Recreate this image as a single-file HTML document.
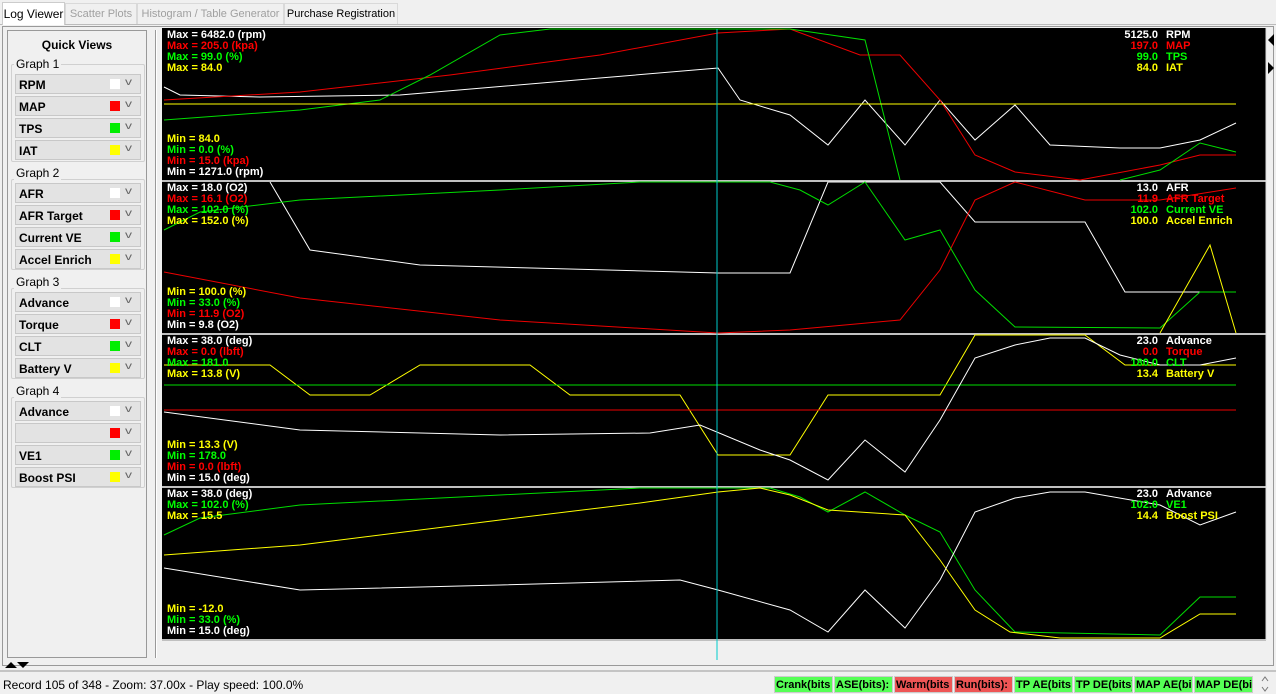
<!DOCTYPE html>
<html><head><meta charset="utf-8"><style>
*{margin:0;padding:0;box-sizing:border-box}
body{width:1276px;height:694px;background:#f0f0f0;font-family:"Liberation Sans",sans-serif;position:relative;overflow:hidden;font-size:12px}
.a{position:absolute}
.tab{position:absolute;top:3px;height:21px;border:1px solid #d9d9d9;border-bottom:none;background:#f0f0f0;font-size:11px;padding:4px 0 0;text-align:center;color:#000;white-space:nowrap;overflow:hidden}
.dis{color:#a0a0a0}
.grp{position:absolute;left:11px;width:134px;border:1px solid #d0d0d0;border-radius:2px}
.gl{position:absolute;left:14px;font-size:12px;background:#f0f0f0;padding:0 2px;color:#000}
.it{position:absolute;left:15px;width:126px;height:20px;background:#e3e3e3;border:1px solid #c8c8c8;font-weight:bold;font-size:12px;padding:3px 0 0 3px}
.it i{position:absolute;left:94px;top:4px;width:10px;height:10px}
.it b{position:absolute;left:110px;top:2px;font-weight:normal;color:#666;font-size:10px;transform:scaleX(1.4)}
.t{position:absolute;font-weight:bold;font-size:11px;line-height:11px;white-space:pre}
.w{color:#fff}.r{color:#f00}.g{color:#0f0}.y{color:#ff0}
.st{position:absolute;top:676px;height:17px;font-weight:bold;font-size:11px;padding:2px 1px 0;overflow:hidden;white-space:nowrap;border:1px solid #ccc}
</style></head><body>
<div class="a" style="left:0;top:24px;width:1276px;height:1px;background:#bbb"></div>
<div class="tab" style="left:2px;top:2px;width:63px;height:23px;background:#fff;border-color:#ccc;font-size:12px">Log Viewer</div>
<div class="tab dis" style="left:65px;width:72px">Scatter Plots</div>
<div class="tab dis" style="left:137px;width:147px">Histogram / Table Generator</div>
<div class="tab" style="left:284px;width:114px">Purchase Registration</div>
<div class="a" style="left:2px;top:26px;width:1272px;height:640px;border:1px solid #999"></div>
<div class="a" style="left:7px;top:30px;width:140px;height:628px;border:1px solid #999"></div>
<div class="a" style="left:155px;top:30px;width:2px;height:628px;border-left:1px solid #999;border-right:1px solid #fff"></div>
<div class="a" style="left:0;top:38px;width:154px;text-align:center;font-weight:bold;font-size:12px">Quick Views</div>
<div class="grp" style="top:64px;height:98px"></div><div class="gl" style="top:57px">Graph 1</div>
<div class="grp" style="top:179px;height:91px"></div><div class="gl" style="top:166px">Graph 2</div>
<div class="grp" style="top:288px;height:91px"></div><div class="gl" style="top:275px">Graph 3</div>
<div class="grp" style="top:397px;height:91px"></div><div class="gl" style="top:384px">Graph 4</div>
<div class="it" style="top:74px">RPM<i style="background:#fff"></i><b>v</b></div>
<div class="it" style="top:96px">MAP<i style="background:#f00"></i><b>v</b></div>
<div class="it" style="top:118px">TPS<i style="background:#0e0"></i><b>v</b></div>
<div class="it" style="top:140px">IAT<i style="background:#ff0"></i><b>v</b></div>
<div class="it" style="top:183px">AFR<i style="background:#fff"></i><b>v</b></div>
<div class="it" style="top:205px">AFR Target<i style="background:#f00"></i><b>v</b></div>
<div class="it" style="top:227px">Current VE<i style="background:#0e0"></i><b>v</b></div>
<div class="it" style="top:249px">Accel Enrich<i style="background:#ff0"></i><b>v</b></div>
<div class="it" style="top:292px">Advance<i style="background:#fff"></i><b>v</b></div>
<div class="it" style="top:314px">Torque<i style="background:#f00"></i><b>v</b></div>
<div class="it" style="top:336px">CLT<i style="background:#0e0"></i><b>v</b></div>
<div class="it" style="top:358px">Battery V<i style="background:#ff0"></i><b>v</b></div>
<div class="it" style="top:401px">Advance<i style="background:#fff"></i><b>v</b></div>
<div class="it" style="top:423px"><i style="background:#f00"></i><b>v</b></div>
<div class="it" style="top:445px">VE1<i style="background:#0e0"></i><b>v</b></div>
<div class="it" style="top:467px">Boost PSI<i style="background:#ff0"></i><b>v</b></div>

<svg class="a" style="left:0;top:0" width="1276" height="694">
<rect x="162" y="28" width="1104" height="612" fill="#000"/>
<g stroke="#c0c0c0" stroke-width="2"><line x1="162" y1="181" x2="1266" y2="181"/><line x1="162" y1="334" x2="1266" y2="334"/><line x1="162" y1="487" x2="1266" y2="487"/><line x1="162" y1="640" x2="1266" y2="640"/></g>
<line x1="1266" y1="28" x2="1266" y2="640" stroke="#ddd"/>
<g fill="none" stroke-width="1">
<polyline stroke="#fff" points="164,87 180,95 260,97 400,95 600,78 718,68 740,100 790,115 828,145 865,100 905,145 940,100 975,140 1015,105 1050,145 1120,148 1160,148 1200,140 1236,123"/>
<polyline stroke="#e00" points="164,100 300,92 450,75 600,55 718,33 790,29 860,55 900,55 940,100 975,155 1015,172 1080,180 1160,165 1200,155 1236,155"/>
<polyline stroke="#0d0" points="164,120 300,110 380,100 430,75 500,35 550,29 790,29 865,40 900,180"/>
<polyline stroke="#0d0" points="1120,180 1160,170 1200,143 1236,152"/>
<line x1="164" y1="104" x2="1236" y2="104" stroke="#ff0"/>
<polyline stroke="#fff" points="270,182 310,250 420,265 718,273 790,273 828,182 940,182 975,222 1085,222 1125,292 1236,292"/>
<polyline stroke="#e00" points="164,272 300,298 500,320 718,333 790,330 900,320 940,270 975,200 1015,182 1085,200 1160,200 1236,188"/>
<polyline stroke="#0d0" points="164,230 200,212 300,200 500,190 640,182 770,182 800,190 828,205 865,182 905,240 940,230 975,290 1015,327 1160,328 1200,292 1236,292"/>
<polyline stroke="#ff0" points="1160,333 1210,245 1236,333"/>
<polyline stroke="#ff0" points="164,365 270,365 310,395 370,395 420,365 530,365 570,395 680,395 718,455 790,455 828,395 940,395 975,335 1085,335 1125,365 1236,365"/>
<line x1="164" y1="385" x2="1236" y2="385" stroke="#0d0"/>
<line x1="164" y1="410" x2="1236" y2="410" stroke="#e00"/>
<polyline stroke="#fff" points="164,412 300,430 500,435 650,433 700,425 760,450 790,460 828,480 865,440 905,472 940,420 975,358 1015,345 1050,338 1085,338 1120,355 1160,365 1200,365 1236,358"/>
<polyline stroke="#0d0" points="164,535 200,518 300,505 500,495 640,488 770,488 800,497 828,512 865,492 905,515 940,532 975,590 1015,632 1160,635 1200,597 1236,597"/>
<polyline stroke="#ff0" points="164,555 300,545 500,520 640,503 718,492 760,488 790,495 828,510 905,515 940,560 975,610 1010,632 1060,638 1160,638 1200,614 1236,614"/>
<polyline stroke="#fff" points="164,568 300,590 500,585 680,580 718,590 790,610 828,632 865,590 905,628 940,580 975,512 1015,498 1050,492 1085,492 1160,505 1200,525 1236,512"/>
</g>
<line x1="717" y1="29" x2="717" y2="660" stroke="#0cc"/>
<path d="M1268 40 L1274 34 L1274 46Z M1268 62 L1274 68 L1268 74Z" fill="#000"/>
<path d="M5 668 L11 662 L17 668Z M17 662 L23 668 L29 662Z" fill="#000"/>
<rect x="0" y="670" width="1276" height="24" fill="#f0f0f0"/>
<line x1="0" y1="671" x2="1276" y2="671" stroke="#999"/>
<path d="M1262 681 L1265 677 L1268 681 M1262 687 L1265 691 L1268 687" stroke="#777" fill="none"/>
</svg>

<div class="t w" style="left:167px;top:30px">Max = 6482.0 (rpm)</div>
<div class="t r" style="left:167px;top:41px">Max = 205.0 (kpa)</div>
<div class="t g" style="left:167px;top:52px">Max = 99.0 (%)</div>
<div class="t y" style="left:167px;top:63px">Max = 84.0</div>
<div class="t y" style="left:167px;top:134px">Min = 84.0</div>
<div class="t g" style="left:167px;top:145px">Min = 0.0 (%)</div>
<div class="t r" style="left:167px;top:156px">Min = 15.0 (kpa)</div>
<div class="t w" style="left:167px;top:167px">Min = 1271.0 (rpm)</div>

<div class="t w" style="left:167px;top:183px">Max = 18.0 (O2)</div>
<div class="t r" style="left:167px;top:194px">Max = 16.1 (O2)</div>
<div class="t g" style="left:167px;top:205px">Max = 102.0 (%)</div>
<div class="t y" style="left:167px;top:216px">Max = 152.0 (%)</div>
<div class="t y" style="left:167px;top:287px">Min = 100.0 (%)</div>
<div class="t g" style="left:167px;top:298px">Min = 33.0 (%)</div>
<div class="t r" style="left:167px;top:309px">Min = 11.9 (O2)</div>
<div class="t w" style="left:167px;top:320px">Min = 9.8 (O2)</div>

<div class="t w" style="left:167px;top:336px">Max = 38.0 (deg)</div>
<div class="t r" style="left:167px;top:347px">Max = 0.0 (lbft)</div>
<div class="t g" style="left:167px;top:358px">Max = 181.0</div>
<div class="t y" style="left:167px;top:369px">Max = 13.8 (V)</div>
<div class="t y" style="left:167px;top:440px">Min = 13.3 (V)</div>
<div class="t g" style="left:167px;top:451px">Min = 178.0</div>
<div class="t r" style="left:167px;top:462px">Min = 0.0 (lbft)</div>
<div class="t w" style="left:167px;top:473px">Min = 15.0 (deg)</div>

<div class="t w" style="left:167px;top:489px">Max = 38.0 (deg)</div>
<div class="t g" style="left:167px;top:500px">Max = 102.0 (%)</div>
<div class="t y" style="left:167px;top:511px">Max = 15.5</div>
<div class="t y" style="left:167px;top:604px">Min = -12.0</div>
<div class="t g" style="left:167px;top:615px">Min = 33.0 (%)</div>
<div class="t w" style="left:167px;top:626px">Min = 15.0 (deg)</div>

<div class="t w" style="left:1100px;top:30px;width:58px;text-align:right">5125.0</div><div class="t w" style="left:1166px;top:30px">RPM</div>
<div class="t r" style="left:1100px;top:41px;width:58px;text-align:right">197.0</div><div class="t r" style="left:1166px;top:41px">MAP</div>
<div class="t g" style="left:1100px;top:52px;width:58px;text-align:right">99.0</div><div class="t g" style="left:1166px;top:52px">TPS</div>
<div class="t y" style="left:1100px;top:63px;width:58px;text-align:right">84.0</div><div class="t y" style="left:1166px;top:63px">IAT</div>

<div class="t w" style="left:1100px;top:183px;width:58px;text-align:right">13.0</div><div class="t w" style="left:1166px;top:183px">AFR</div>
<div class="t r" style="left:1100px;top:194px;width:58px;text-align:right">11.9</div><div class="t r" style="left:1166px;top:194px">AFR Target</div>
<div class="t g" style="left:1100px;top:205px;width:58px;text-align:right">102.0</div><div class="t g" style="left:1166px;top:205px">Current VE</div>
<div class="t y" style="left:1100px;top:216px;width:58px;text-align:right">100.0</div><div class="t y" style="left:1166px;top:216px">Accel Enrich</div>

<div class="t w" style="left:1100px;top:336px;width:58px;text-align:right">23.0</div><div class="t w" style="left:1166px;top:336px">Advance</div>
<div class="t r" style="left:1100px;top:347px;width:58px;text-align:right">0.0</div><div class="t r" style="left:1166px;top:347px">Torque</div>
<div class="t g" style="left:1100px;top:358px;width:58px;text-align:right">180.0</div><div class="t g" style="left:1166px;top:358px">CLT</div>
<div class="t y" style="left:1100px;top:369px;width:58px;text-align:right">13.4</div><div class="t y" style="left:1166px;top:369px">Battery V</div>

<div class="t w" style="left:1100px;top:489px;width:58px;text-align:right">23.0</div><div class="t w" style="left:1166px;top:489px">Advance</div>
<div class="t g" style="left:1100px;top:500px;width:58px;text-align:right">102.0</div><div class="t g" style="left:1166px;top:500px">VE1</div>
<div class="t y" style="left:1100px;top:511px;width:58px;text-align:right">14.4</div><div class="t y" style="left:1166px;top:511px">Boost PSI</div>

<div class="a" style="left:3px;top:678px;font-size:12px">Record 105 of 348 - Zoom: 37.00x - Play speed: 100.0%</div>
<div class="st" style="left:774px;width:59px;background:#5f5">Crank(bits</div>
<div class="st" style="left:834px;width:59px;background:#5f5">ASE(bits):</div>
<div class="st" style="left:894px;width:59px;background:#e55">Warm(bits</div>
<div class="st" style="left:954px;width:59px;background:#e55">Run(bits):</div>
<div class="st" style="left:1014px;width:59px;background:#5f5">TP AE(bits</div>
<div class="st" style="left:1074px;width:59px;background:#5f5">TP DE(bits)</div>
<div class="st" style="left:1134px;width:59px;background:#5f5">MAP AE(bi</div>
<div class="st" style="left:1194px;width:59px;background:#5f5">MAP DE(bi</div>
</body></html>
